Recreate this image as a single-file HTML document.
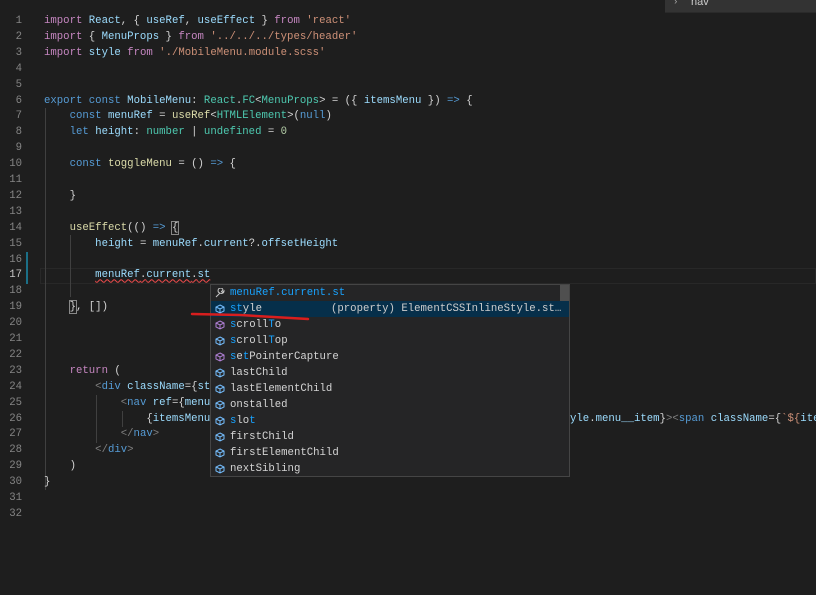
<!DOCTYPE html>
<html><head><meta charset="utf-8"><style>
body{margin:0;width:816px;height:595px;background:#1e1e1e;overflow:hidden;position:relative;font-family:"Liberation Mono",monospace;font-size:10.67px;color:#d4d4d4}
.l{position:absolute;left:0;height:16px;line-height:16px;white-space:pre}
.n{position:absolute;width:22px;text-align:right;color:#858585;white-space:pre}
.c{position:absolute;left:44px}
.k{color:#569cd6}.p{color:#c586c0}.s{color:#ce9178}.v{color:#9cdcfe}.t{color:#4ec9b0}.f{color:#dcdcaa}.nu{color:#b5cea8}
.g{position:absolute;width:1px;background:#404040}
#w{position:absolute;left:210px;top:284px;width:360px;height:193px;background:#252526;border:1px solid #454545;box-sizing:border-box}
.r{position:absolute;left:0;width:350px;height:16px;line-height:16px;white-space:pre;color:#d4d4d4}
.r .i{position:absolute;left:4px;top:3px;width:10px;height:10px}
.r span.tx{position:absolute;left:19px}
.hl{color:#18a3ff}
.sq{text-decoration:underline wavy #f14c4c;text-decoration-thickness:1px}
</style></head><body>
<div style="position:absolute;left:665px;top:0;width:151px;height:12px;background:#333;border-bottom:1px solid #2a2a2a"><span style="position:absolute;left:8px;top:-3px;color:#aaa;font-size:9px">›</span><span style="position:absolute;left:26px;top:-4px;color:#ccc;font-family:'Liberation Sans',sans-serif;font-size:11px">nav</span></div>
<div style="position:absolute;left:40px;top:268px;width:776px;height:16px;box-sizing:border-box;border:1px solid #282828"></div>
<div style="position:absolute;left:26px;top:252px;width:2px;height:32px;background:#1b6f87"></div>
<div class="g" style="left:45px;top:108px;height:382px"></div>
<div class="g" style="left:70px;top:235px;height:62px"></div>
<div class="g" style="left:96px;top:395px;height:48px"></div>
<div class="g" style="left:122px;top:411px;height:16px"></div>

<div id="code"></div>
<script>
const L=[
`<span class="p">import</span> <span class="v">React</span>, { <span class="v">useRef</span>, <span class="v">useEffect</span> } <span class="p">from</span> <span class="s">'react'</span>`,
`<span class="p">import</span> { <span class="v">MenuProps</span> } <span class="p">from</span> <span class="s">'../../../types/header'</span>`,
`<span class="p">import</span> <span class="v">style</span> <span class="p">from</span> <span class="s">'./MobileMenu.module.scss'</span>`,
``,``,
`<span class="k">export</span> <span class="k">const</span> <span class="v">MobileMenu</span>: <span class="t">React</span>.<span class="t">FC</span>&lt;<span class="t">MenuProps</span>&gt; = ({ <span class="v">itemsMenu</span> }) <span class="k">=&gt;</span> {`,
`    <span class="k">const</span> <span class="v">menuRef</span> = <span class="f">useRef</span>&lt;<span class="t">HTMLElement</span>&gt;(<span class="k">null</span>)`,
`    <span class="k">let</span> <span class="v">height</span>: <span class="t">number</span> | <span class="t">undefined</span> = <span class="nu">0</span>`,
``,
`    <span class="k">const</span> <span class="f">toggleMenu</span> = () <span class="k">=&gt;</span> {`,
``,
`    }`,
``,
`    <span class="f">useEffect</span>(() <span class="k">=&gt;</span> <span style="outline:1px solid #888">{</span>`,
`        <span class="v">height</span> = <span class="v">menuRef</span>.<span class="v">current</span>?.<span class="v">offsetHeight</span>`,
``,
`        <span class="sq"><span class="v">menuRef</span>.<span class="v">current</span>.<span class="v">st</span></span>`,
``,
`    <span style="outline:1px solid #888">}</span>, [])`,
``,``,``,
`    <span class="p">return</span> (`,
`        <span style="color:#808080">&lt;</span><span class="k">div</span> <span class="v">className</span>={<span class="v">st</span>`,
`            <span style="color:#808080">&lt;</span><span class="k">nav</span> <span class="v">ref</span>={<span class="v">menu</span>`,
`                {<span class="v">itemsMenu</span>`,
`            <span style="color:#808080">&lt;/</span><span class="k">nav</span><span style="color:#808080">&gt;</span>`,
`        <span style="color:#808080">&lt;/</span><span class="k">div</span><span style="color:#808080">&gt;</span>`,
`    )`,
`}`,
``,``];
let h='';
L.forEach((s,i)=>{const y=13+i*15.9;h+=`<div class="l" style="top:${y}px"><span class="n" style="${i==16?'color:#c6c6c6':''}">${i+1}</span><span class="c">${s}</span></div>`;});
h+=`<div class="l" style="top:${13+25*15.9}px;left:570px"><span class="v">yle</span>.<span class="v">menu__item</span>}<span style="color:#808080">&gt;&lt;</span><span class="k">span</span> <span class="v">className</span>={<span class="s">\`\${</span><span class="v">ite</span></div>`;
document.getElementById('code').innerHTML=h;
</script>

<div id="w">
<div style="position:absolute;right:0;top:0;width:9px;height:25px;background:#4f4f4f"></div>
<div id="rows"></div>
</div>
<svg style="position:absolute;left:0;top:0" width="816" height="595"><path d="M192 314 L240 315 L308 319" stroke="#d81e1e" stroke-width="2.5" fill="none" stroke-linecap="round"/></svg>
<script>
const cube='<svg class="i" viewBox="0 0 10 10"><path d="M5 1 L9 3 L9 7 L5 9 L1 7 L1 3 Z M1 3 L5 5 L9 3 M5 5 L5 9" fill="none" stroke="C" stroke-width="1"/></svg>';
const R=[
['w','<span class="hl">menuRef.current.st</span>'],
['b','<span class="hl">st</span>yle'],
['m','<span class="hl">s</span>croll<span class="hl">T</span>o'],
['b','<span class="hl">s</span>croll<span class="hl">T</span>op'],
['m','<span class="hl">s</span>e<span class="hl">t</span>PointerCapture'],
['b','lastChild'],['b','lastElementChild'],['b','onstalled'],
['b','<span class="hl">s</span>lo<span class="hl">t</span>'],
['b','firstChild'],['b','firstElementChild'],['b','nextSibling']];
let rh='';
R.forEach((r,i)=>{let ic;
if(r[0]=='w')ic='<svg class="i" viewBox="0 0 10 10"><path d="M1 9 L5 5 M5 5 A2.5 2.5 0 1 1 8 2 L6.5 3.5 L7.5 4.5 L9 3 A2.5 2.5 0 0 1 5 5" fill="none" stroke="#c5c5c5" stroke-width="1"/></svg>';
else ic=cube.replace('C',r[0]=='m'?'#b180d7':'#75beff');
const sel=i==1;
rh+=`<div class="r" style="top:${i*16}px;${sel?'background:#062f4a;width:358px':''}">${ic}<span class="tx">${r[1]}</span>${sel?'<span style="position:absolute;left:120px;color:#ccc">(property) ElementCSSInlineStyle.st…</span>':''}</div>`;});
document.getElementById('rows').innerHTML=rh;
</script>
</body></html>
